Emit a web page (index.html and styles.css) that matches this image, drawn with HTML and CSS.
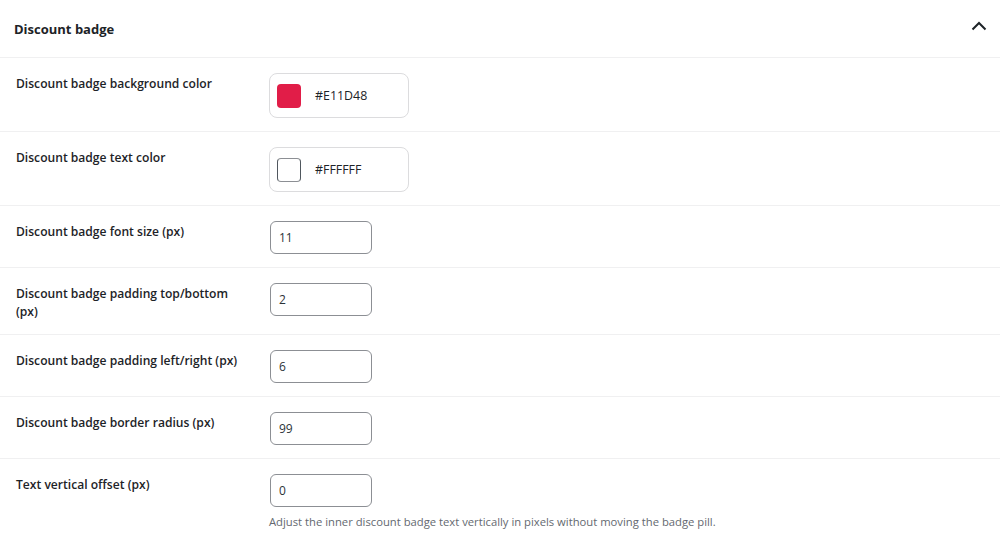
FILE: index.html
```html
<!DOCTYPE html>
<html>
<head>
<meta charset="utf-8">
<link rel="stylesheet" href="styles.css">
</head>
<body>
<section class="panel">
  <header class="panel-head">
    <h2 class="panel-title">Discount badge</h2>
    <svg class="chev" width="16" height="10" viewBox="0 0 16 10"><path d="M1.5 8.5 L8 2 L14.5 8.5" fill="none" stroke="#1d2327" stroke-width="2"/></svg>
  </header>
  <div class="row">
    <label class="lbl">Discount badge background color</label>
    <div class="ctl">
      <div class="color-field"><span class="swatch red"></span><span class="hex">#E11D48</span></div>
    </div>
  </div>
  <div class="row">
    <label class="lbl">Discount badge text color</label>
    <div class="ctl">
      <div class="color-field"><span class="swatch white"></span><span class="hex">#FFFFFF</span></div>
    </div>
  </div>
  <div class="row">
    <label class="lbl">Discount badge font size (px)</label>
    <div class="ctl"><div class="num">11</div></div>
  </div>
  <div class="row">
    <label class="lbl">Discount badge padding top/bottom (px)</label>
    <div class="ctl"><div class="num">2</div></div>
  </div>
  <div class="row">
    <label class="lbl">Discount badge padding left/right (px)</label>
    <div class="ctl"><div class="num">6</div></div>
  </div>
  <div class="row">
    <label class="lbl">Discount badge border radius (px)</label>
    <div class="ctl"><div class="num">99</div></div>
  </div>
  <div class="row last">
    <label class="lbl">Text vertical offset (px)</label>
    <div class="ctl">
      <div class="num">0</div>
      <p class="desc">Adjust the inner discount badge text vertically in pixels without moving the badge pill.</p>
    </div>
  </div>
</section>
</body>
</html>
```

FILE: styles.css
```css
html, body {
  margin: 0;
  padding: 0;
  background: #fff;
}
body {
  font-family: "Open Sans", "Noto Sans", sans-serif;
  color: #1d2327;
}
.panel {
  width: 1000px;
}
.panel-head {
  display: flex;
  align-items: center;
  justify-content: space-between;
  height: 58px;
  padding: 0 13px 0 14px;
  border-bottom: 1px solid #f0f0f1;
  box-sizing: border-box;
}
.panel-title {
  margin: 0;
  font-size: 13px;
  font-weight: 700;
  color: #1d2327;
}
.chev {
  display: block;
  margin-top: -6px;
}
.row {
  display: flex;
  padding: 15px 0 13px 16px;
  border-bottom: 1px solid #f0f0f1;
}
.lbl {
  width: 228px;
  flex: none;
  padding-top: 2px;
  padding-right: 25px;
  font-size: 12.1px;
  font-weight: 600;
  line-height: 18px;
  color: #1d2327;
}
.color-field {
  display: flex;
  align-items: center;
  width: 140px;
  height: 45px;
  box-sizing: border-box;
  border: 1px solid #dcdcde;
  border-radius: 8px;
  padding-left: 7px;
}
.swatch {
  width: 24px;
  height: 24px;
  border-radius: 4px;
  box-sizing: border-box;
}
.swatch.red { background: #e11d48; }
.swatch.white { background: #fff; border: 1px solid #8c8f94; border-left-color: #50575e; border-right-color: #50575e; }
.hex {
  margin-left: 14px;
  font-size: 12.4px;
  color: #1d2327;
}
.num {
  width: 102px;
  height: 33px;
  box-sizing: border-box;
  border: 1px solid #8c8f94;
  border-radius: 6px;
  padding-left: 8px;
  font-size: 12px;
  line-height: 31px;
  color: #2c3338;
  margin-left: 1px;
}
.row.last {
  border-bottom: none;
  padding-bottom: 30px;
}
.desc {
  margin: 7px 0 0;
  font-size: 11.25px;
  color: #646970;
}
```
